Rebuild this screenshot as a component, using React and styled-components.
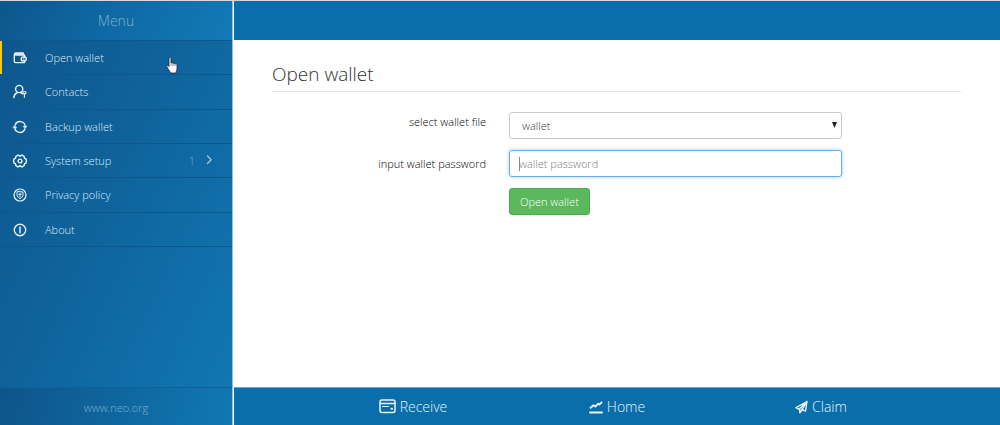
import React from "react";
import styled, { createGlobalStyle } from "styled-components";

const GlobalStyle = createGlobalStyle`
  *, *::before, *::after { box-sizing: border-box; }
  body {
    margin: 0;
    background: #fff;
    color: #333;
    font-family: "Open Sans", "Noto Sans", sans-serif;
    font-size: 11px;
    font-weight: 300;
    line-height: 16px;
  }
  button, input, select { font: inherit; }
  a { color: inherit; text-decoration: none; }
`;

const Page = styled.div`
  display: grid;
  grid-template-columns: 232px 1fr;
  column-gap: 2px;
  min-height: 100vh;
  border-top: 1px solid #d3d9dc;
`;

const Sidebar = styled.aside`
  display: flex;
  flex-direction: column;
  background: linear-gradient(115deg, #0e558b 0%, #0f619a 40%, #1178b3 100%);
  box-shadow: 1px 0 #8fbdda;
`;

const MenuTitle = styled.h2`
  margin: 0;
  height: 39px;
  padding-top: 10px;
  text-align: center;
  font-size: 14px;
  font-weight: 300;
  line-height: 20px;
  color: #7db0d1;
  background: linear-gradient(115deg, #0e568b 0%, #0f6aa5 50%, #127ab5 100%);
`;

const MenuList = styled.ul`
  display: grid;
  grid-auto-rows: 1fr;
  height: 207px;
  margin: 0;
  padding: 0;
  list-style: none;
  border-top: 1px solid #0d578c;
`;

const MenuItem = styled.li`
  display: grid;
  border-bottom: 1px solid #0d578c;
`;

const MenuLink = styled.a`
  display: flex;
  align-items: center;
  padding: 1px 15px 0 10px;
  border-left: 2px solid ${(p) => (p.$active ? "#ffc90a" : "transparent")};
  color: #dcebf5;

  svg { flex: none; width: 16px; height: 16px; color: #eaf3f9; }
`;

const MenuText = styled.span`
  flex: 1;
  margin-left: 17px;
`;

const Count = styled.span`
  color: #6fa9cf;
`;

const Chevron = styled.span`
  display: flex;
  margin-left: 6px;
`;

const SidebarFooter = styled.div`
  margin-top: auto;
  height: 38px;
  padding-top: 12px;
  border-top: 1px solid #0e619a;
  text-align: center;
  color: #7db0d1;
  background: linear-gradient(105deg, #0e5489 0%, #0f669f 50%, #1178b2 100%);
`;

const Main = styled.div`
  display: flex;
  flex-direction: column;
  min-width: 0;
`;

const TopBar = styled.header`
  height: 39px;
  background: #0a6eaa;
`;

const Content = styled.main`
  flex: 1;
  padding: 22px 39px 22px 38px;
`;

const Title = styled.h1`
  margin: 0 0 20px;
  padding-bottom: 5px;
  border-bottom: 1px solid #e8e8e8;
  font-size: 19px;
  font-weight: 300;
  line-height: 24px;
`;

const Form = styled.form`
  display: grid;
  grid-template-columns: 214fr 333fr 96fr;
  gap: 11px 23px;
`;

const Label = styled.label`
  grid-column: 1;
  padding-top: ${(p) => p.$top}px;
  text-align: right;
  color: #000;
`;

const Field = styled.div`
  grid-column: 2;
  position: relative;
  display: grid;
`;

const Select = styled.select`
  appearance: none;
  height: 27px;
  padding: 0 12px;
  border: 1px solid #c9cccc;
  border-radius: 3px;
  background: #fff;
  color: #444;
  outline: none;
`;

const Arrow = styled.svg`
  position: absolute;
  right: 5px;
  top: 10px;
  width: 5px;
  height: 6px;
  pointer-events: none;
`;

const Input = styled.input`
  width: 100%;
  height: 27px;
  padding: 0 9px;
  border: 1px solid #66afe9;
  border-radius: 3px;
  box-shadow: 0 0 4px #66afe999;
  color: #555;
  outline: none;

  &::placeholder { color: #808080; opacity: 1; }
`;

const Caret = styled.span`
  position: absolute;
  left: 10px;
  top: 7px;
  width: 1px;
  height: 14px;
  background: #888;
`;

const Submit = styled.button`
  grid-column: 2;
  justify-self: start;
  height: 27px;
  padding: 0 10px;
  border: 1px solid #4cae4c;
  border-radius: 3px;
  background: #5cb85c;
  color: #fff;
`;

const BottomBar = styled.footer`
  height: 38px;
  border-top: 1px solid #6aa6cb;
  background: #0a6eaa;
`;

const Tabs = styled.nav`
  display: grid;
  grid-template-columns: repeat(3, 1fr);
  height: 100%;
  margin: 0 77px;
`;

const Tab = styled.a`
  display: flex;
  align-items: center;
  justify-content: center;
  gap: 4px;
  color: #eaf3f9;
  font-size: 14px;
  line-height: 20px;
`;

const Pointer = styled.svg`
  position: absolute;
  left: 166px;
  top: 57px;
  width: 12px;
  height: 17px;
  pointer-events: none;
`;

function Icon({ children, width = 16, height = 16 }) {
  return (
    <svg
      width={width}
      height={height}
      viewBox={`0 0 ${width} ${height}`}
      fill="none"
      stroke="currentColor"
      strokeWidth="1.4"
      strokeLinecap="round"
      strokeLinejoin="round"
      aria-hidden="true"
    >
      {children}
    </svg>
  );
}

const WalletIcon = () => (
  <Icon>
    <path d="M12.500 6.800V5H2.500v-.8c0-.8.400-1.200 1.200-1.200h7.500v1.800M2.300 5v6.300c0 .8.500 1.300 1.300 1.300h8.900v-1.700" />
    <path d="M3.500 4h7" />
    <path d="M13.400 7h-2.300a1.900 1.900 0 0 0 0 3.800h2.300l.8-.9V7.900z" />
    <circle cx="11.700" cy="8.900" r=".2" />
  </Icon>
);

const ContactIcon = () => (
  <Icon>
    <circle cx="7.200" cy="5" r="3.600" />
    <path d="M1.800 13.600c.3-2.600 1.600-4.300 3.500-5.100M8.800 8.500c.6.300 1 .7 1.400 1.200" />
    <path d="M10.900 7.700h2.900v2h-2.900zM12.400 9.700v3.500" strokeWidth="1.100" />
  </Icon>
);

const SyncIcon = () => (
  <Icon>
    <path d="M3.200 5.800A5.200 5.200 0 0 1 13.200 7.500M12.800 10.200A5.200 5.200 0 0 1 2.800 8.500" />
    <path d="M11.300 7.200h3.700l-1.900 2.400zM1 8.800h3.700L2.900 6.400z" fill="currentColor" strokeWidth=".5" />
  </Icon>
);

const GearIcon = () => (
  <Icon>
    <path d="M5.500 2.300h1.300c.5 1.200 1.900 1.200 2.400 0h1.300l1.800 1.200c-.4 1.300.3 2.300 1.700 2.500l.5 2-.5 2c-1.400.2-2.100 1.200-1.700 2.500l-1.800 1.200H9.200c-.5-1.200-1.900-1.200-2.400 0H5.500l-1.800-1.200C4.100 11.200 3.400 10.200 2 10l-.5-2L2 6c1.400-.2 2.100-1.200 1.700-2.500z" />
    <circle cx="8" cy="8" r="1.900" />
  </Icon>
);

const ShieldIcon = () => (
  <Icon>
    <circle cx="8" cy="8" r="6" strokeWidth="1.200" />
    <path d="M8 4.500l3 .7v2.600c0 1.700-1.300 2.900-3 3.700-1.700-.8-3-2-3-3.700V5.200z" strokeWidth="1" />
    <path d="M8 6v4M6.600 7.300h2.800" strokeWidth=".9" />
  </Icon>
);

const InfoIcon = () => (
  <Icon>
    <circle cx="8" cy="8" r="5.700" />
    <path d="M8 5.200v5.600" />
  </Icon>
);

const ReceiveIcon = () => (
  <Icon width={17} height={15}>
    <rect x="1" y="1" width="15" height="12.500" rx="2" strokeWidth="1.500" />
    <path d="M1 4.500h15" strokeWidth="1.600" />
    <path d="M3.500 7.500h6" strokeWidth="1" />
    <path d="M12.500 9.700h.6" strokeWidth="2" />
  </Icon>
);

const HomeIcon = () => (
  <Icon width={14} height={14}>
    <path d="M1 8.300l3.500-3.100 1.800 1.300 2.700-2.700 1.400.8L13 2" strokeWidth="1.900" strokeLinecap="butt" />
    <path d="M1 12.500h12" strokeWidth="1.900" />
  </Icon>
);

const ClaimIcon = () => (
  <Icon width={13} height={14}>
    <path d="M12 1.500L1 7.600l3 1.700L12 1.500l-1.500 9.700-3.700-1.700L12 1.500" />
    <path d="M4.800 9.600v3.200l2-2.600" />
  </Icon>
);

const menu = [
  { label: "Open wallet", icon: WalletIcon, active: true },
  { label: "Contacts", icon: ContactIcon },
  { label: "Backup wallet", icon: SyncIcon },
  { label: "System setup", icon: GearIcon, count: 1 },
  { label: "Privacy policy", icon: ShieldIcon },
  { label: "About", icon: InfoIcon },
];

const tabs = [
  { label: "Receive", icon: ReceiveIcon },
  { label: "Home", icon: HomeIcon },
  { label: "Claim", icon: ClaimIcon },
];

export default function App() {
  return (
    <>
      <GlobalStyle />
      <Page>
        <Sidebar>
          <MenuTitle>Menu</MenuTitle>
          <MenuList>
            {menu.map(({ label, icon: Glyph, active, count }) => (
              <MenuItem key={label}>
                <MenuLink href="#" $active={active}>
                  <Glyph />
                  <MenuText>{label}</MenuText>
                  {count && <Count>{count}</Count>}
                  {count && (
                    <Chevron>
                      <Icon>
                        <path d="M6.500 3l3.700 3.700-3.700 3.700" stroke="#9cc4de" />
                      </Icon>
                    </Chevron>
                  )}
                </MenuLink>
              </MenuItem>
            ))}
          </MenuList>
          <SidebarFooter>
            <a href="#">www.neo.org</a>
          </SidebarFooter>
        </Sidebar>
        <Main>
          <TopBar />
          <Content>
            <Title>Open wallet</Title>
            <Form onSubmit={(e) => e.preventDefault()}>
              <Label htmlFor="file" $top={2}>select wallet file</Label>
              <Field>
                <Select id="file">
                  <option>wallet</option>
                </Select>
                <Arrow viewBox="0 0 5 6" aria-hidden="true">
                  <path d="M0 0h5L2.500 6z" fill="#222" />
                </Arrow>
              </Field>
              <Label htmlFor="password" $top={6}>input wallet password</Label>
              <Field>
                <Input id="password" type="password" placeholder="wallet password" />
                <Caret />
              </Field>
              <Submit type="submit">Open wallet</Submit>
            </Form>
          </Content>
          <BottomBar>
            <Tabs>
              {tabs.map(({ label, icon: Glyph }) => (
                <Tab href="#" key={label}>
                  <Glyph />
                  {label}
                </Tab>
              ))}
            </Tabs>
          </BottomBar>
        </Main>
      </Page>
      <Pointer viewBox="0 0 12 17" aria-hidden="true">
        <path
          d="M3 1.500c0-1.300 2-1.300 2 0V6c.6-.6 1.800-.4 2 .4.700-.5 1.800-.2 2 .6 1-.4 2 .1 2 1.200V12c0 1-.8 2-1 4H4.500C4 14 1.500 11.500.8 9.500.5 8.300 1.800 8 3 9.500z"
          fill="#fff"
          stroke="#223"
          strokeWidth=".8"
        />
        <path d="M5 6v3M7 6.500V9M9 7v2" stroke="#445" strokeWidth=".6" />
      </Pointer>
    </>
  );
}
